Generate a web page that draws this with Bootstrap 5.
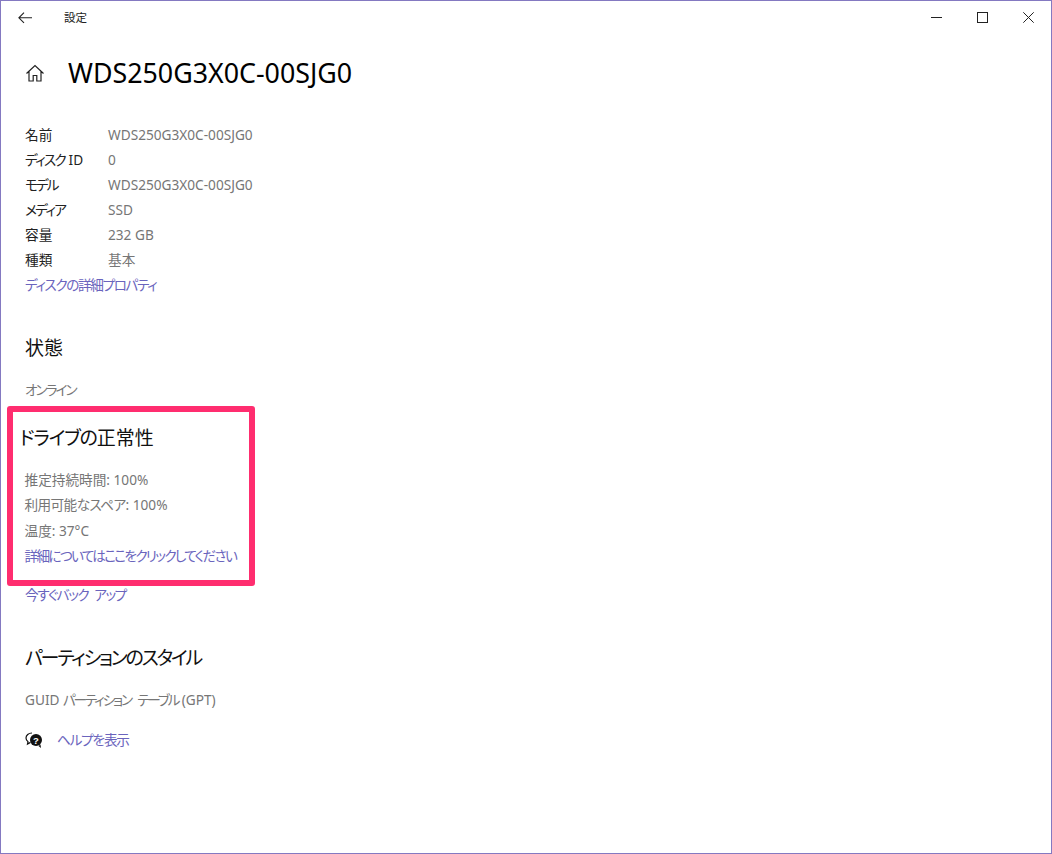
<!DOCTYPE html>
<html lang="ja">
<head>
<meta charset="utf-8">
<title>設定</title>
<link rel="stylesheet" href="https://cdn.jsdelivr.net/npm/bootstrap@5.3.0/dist/css/bootstrap.min.css">
<style>
html,body{margin:0;height:100%;background:#fff}
body{font-family:"Noto Sans","Noto Sans CJK JP",sans-serif;color:#000;font-size:14px;overflow:hidden;font-feature-settings:"palt"}
.win{height:854px;border:1px solid #8479c1}
.tbar{height:33px;padding-left:17px}
.tbar-title{font-size:11.5px;margin-left:32px;line-height:1;color:#222}
.win-ctl{width:46px}
.main{padding-left:24px}
.head-row{height:28px;margin-top:25px;margin-bottom:35px}
.head-ico{width:20px;margin-right:23px}
.page-title{font-size:26.8px;font-weight:400;line-height:28px;margin:0;white-space:nowrap}
.info-row{height:25px;line-height:25px;font-size:13.65px}
.info-k{width:83px;color:#222;white-space:nowrap}
.info-v{color:#767676}
.lnk{color:#6a64bd;text-decoration:none;font-size:13.65px;line-height:25px;display:block;height:25px}
.sec-h{font-size:19px;font-weight:400;line-height:26px;margin:0;color:#111}
.plain{color:#767676;font-size:13.65px;line-height:25px;height:25px}
.sec-state{margin-top:38px}
.gap-h{margin-top:16px}
.pink-box{border:6.5px solid #ff2d6f;border-radius:3px;width:248px;height:180px;margin:4px 0 0 -18px;padding:13px 0 0 11.5px;overflow:hidden}
.pink-box .sec-h{margin-left:-5px;white-space:nowrap}
.pink-box .body-list{margin-top:16px}
.pink-box .plain,.pink-box .lnk{white-space:nowrap;height:25.3px;line-height:25.3px}
.after-box{margin-top:-4px}
.sec-part{margin-top:38px}
.help{margin-top:15px;height:25px}
.help-ico{width:18px;margin-right:14px}
.tk-06{letter-spacing:-.6px}
.tk-12{letter-spacing:-1.2px}
.tk-14{letter-spacing:-1.4px}
.tk-16{letter-spacing:-1.7px}
.tk-17{letter-spacing:-1.7px}
.tk-20{letter-spacing:-2px}
.tk-22{letter-spacing:-2.2px}
.tk-sp{letter-spacing:-1.5px;word-spacing:4px}
.tk-sp2{letter-spacing:-2.2px;word-spacing:5px}
</style>
</head>
<body>
<div class="win d-flex flex-column">
  <div class="tbar d-flex align-items-center">
    <svg width="14" height="12" viewBox="0 0 14 12" fill="none" stroke="#222" stroke-width="1.1"><path d="M14 5.8H1M6 .7 .9 5.8 6 10.9"/></svg>
    <span class="tbar-title">設定</span>
    <div class="ms-auto d-flex">
      <div class="win-ctl d-flex justify-content-center"><svg width="11" height="11" viewBox="0 0 11 11" fill="none" stroke="#222"><path d="M0 5.5H11"/></svg></div>
      <div class="win-ctl d-flex justify-content-center"><svg width="11" height="11" viewBox="0 0 11 11" fill="none" stroke="#222"><rect x=".5" y=".5" width="10" height="10"/></svg></div>
      <div class="win-ctl d-flex justify-content-center"><svg width="11" height="11" viewBox="0 0 11 11" fill="none" stroke="#222"><path d="M.3.3 10.7 10.7M10.7.3.3 10.7"/></svg></div>
    </div>
  </div>
  <div class="main flex-grow-1">
    <div class="head-row d-flex align-items-center">
      <div class="head-ico d-flex"><svg width="20" height="18" viewBox="0 0 20 18" fill="none" stroke="#222" stroke-width="1.2"><path d="M1.5 9.5 10 1.5l8.5 8M4 7.5V17h4.2v-5.5h3.6V17H16V7.5"/></svg></div>
      <h1 class="page-title">WDS250G3X0C-00SJG0</h1>
    </div>
    <div class="info-row d-flex"><div class="info-k">名前</div><div class="info-v">WDS250G3X0C-00SJG0</div></div>
    <div class="info-row d-flex"><div class="info-k"><span class="tk-17">ディスク</span> ID</div><div class="info-v">0</div></div>
    <div class="info-row d-flex"><div class="info-k"><span class="tk-20">モデル</span></div><div class="info-v">WDS250G3X0C-00SJG0</div></div>
    <div class="info-row d-flex"><div class="info-k"><span class="tk-17">メディア</span></div><div class="info-v">SSD</div></div>
    <div class="info-row d-flex"><div class="info-k">容量</div><div class="info-v">232 GB</div></div>
    <div class="info-row d-flex"><div class="info-k">種類</div><div class="info-v">基本</div></div>
    <a class="lnk tk-14" href="#">ディスクの詳細プロパティ</a>

    <h2 class="sec-h sec-state">状態</h2>
    <div class="plain gap-h tk-20">オンライン</div>

    <div class="pink-box">
      <h2 class="sec-h"><span class="tk-12">ドライブの</span>正常性</h2>
      <div class="body-list">
        <div class="plain">推定持続時間: 100%</div>
        <div class="plain"><span class="tk-06">利用可能なスペア</span>: 100%</div>
        <div class="plain">温度: 37°C</div>
        <a class="lnk tk-16" href="#">詳細についてはここをクリックしてください</a>
      </div>
    </div>
    <div class="after-box"><a class="lnk tk-sp" href="#">今すぐバック アップ</a></div>

    <h2 class="sec-h sec-part tk-22">パーティションのスタイル</h2>
    <div class="plain gap-h">GUID <span class="tk-sp2">パーティション テーブル</span> (GPT)</div>
    <div class="help d-flex align-items-center">
      <div class="help-ico d-flex"><svg width="18" height="16" viewBox="0 0 18 16"><path d="M7 1C3.500 1 1 3.200 1 6c0 1.500.8 2.800 2 3.700L2.500 12l3-1.600" fill="none" stroke="#111" stroke-width="1.200"/><circle cx="11" cy="8" r="6" fill="#111"/><path d="M13.500 14 16 16l-.5-3.500z" fill="#111"/><text x="11" y="11.500" text-anchor="middle" font-size="9.500" font-weight="700" fill="#fff" font-family="Liberation Sans, sans-serif">?</text></svg></div>
      <a class="lnk tk-12" href="#">ヘルプを表示</a>
    </div>
  </div>
</div>
<script src="https://cdn.jsdelivr.net/npm/bootstrap@5.3.0/dist/js/bootstrap.bundle.min.js"></script>
</body>
</html>
